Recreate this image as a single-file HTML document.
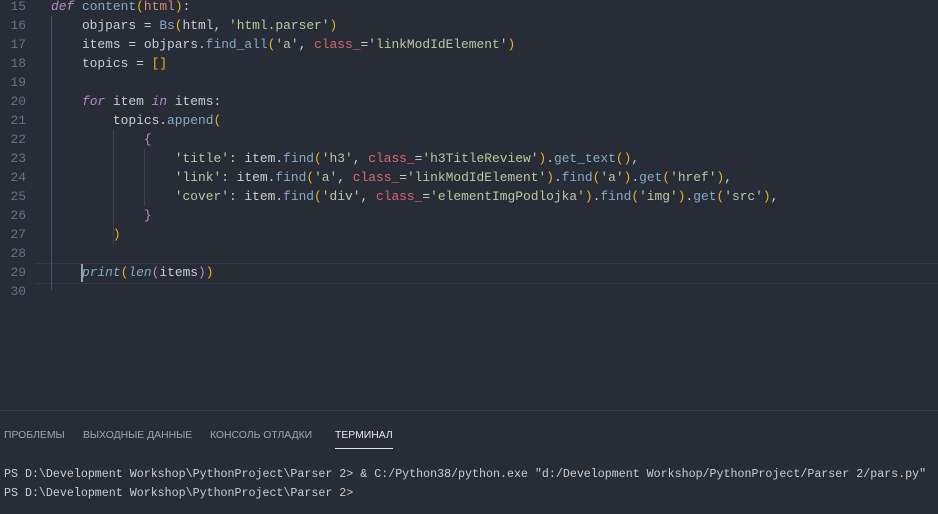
<!DOCTYPE html>
<html><head><meta charset="utf-8"><style>
body{margin:0;width:938px;height:514px;background:#282c37;overflow:hidden;font-family:"Liberation Mono",monospace;}
.ed{position:absolute;left:0;top:-3px;width:938px;}
.l{position:relative;height:19px;line-height:19px;font-size:12.9px;color:#c8ccd4;white-space:pre;}
.n{position:absolute;left:0;width:26px;text-align:right;color:#6b7080;}
.c{position:absolute;left:51px;}
.k{color:#b08cc6;font-style:italic}
.f{color:#82aac8}
.p{color:#d98a6f}
.b{color:#e6b422}
.m{color:#c586c0}
.s{color:#b8c99e}
.r{color:#d56a6a}
.hl{position:absolute;left:35px;right:0;top:263px;height:19px;border-top:1px solid #343846;border-bottom:1px solid #343846;}
.g{position:absolute;width:1px;background:#3c4150;}
.t{position:absolute;top:430px;font-family:"Liberation Sans",sans-serif;font-size:10.4px;color:#a0a4ae;white-space:nowrap;}
.term{position:absolute;left:4px;top:465px;font-size:11.65px;line-height:19px;color:#c8ccd4;white-space:pre;}
</style></head><body>
<div class="hl"></div>
<div class="g" style="left:51px;top:16px;height:274px;background:#4a5060"></div>
<div class="g" style="left:113px;top:130px;height:114px"></div>
<div class="g" style="left:144px;top:149px;height:57px"></div>
<div style="position:absolute;left:81px;top:264px;width:2px;height:18px;background:#9aa0b0"></div>
<div class="ed">
<div class="l"><span class="n">15</span><span class="c"><span class="k">def</span> <span class="f">content</span><span class="b">(</span><span class="p">html</span><span class="b">)</span>:</span></div>
<div class="l"><span class="n">16</span><span class="c">    objpars = <span class="f">Bs</span><span class="b">(</span>html, <span class="s">'html.parser'</span><span class="b">)</span></span></div>
<div class="l"><span class="n">17</span><span class="c">    items = objpars.<span class="f">find_all</span><span class="b">(</span><span class="s">'a'</span>, <span class="r">class_</span>=<span class="s">'linkModIdElement'</span><span class="b">)</span></span></div>
<div class="l"><span class="n">18</span><span class="c">    topics = <span class="b">[]</span></span></div>
<div class="l"><span class="n">19</span></div>
<div class="l"><span class="n">20</span><span class="c">    <span class="k">for</span> item <span class="k">in</span> items:</span></div>
<div class="l"><span class="n">21</span><span class="c">        topics.<span class="f">append</span><span class="b">(</span></span></div>
<div class="l"><span class="n">22</span><span class="c">            <span class="m">{</span></span></div>
<div class="l"><span class="n">23</span><span class="c">                <span class="s">'title'</span>: item.<span class="f">find</span><span class="b">(</span><span class="s">'h3'</span>, <span class="r">class_</span>=<span class="s">'h3TitleReview'</span><span class="b">)</span>.<span class="f">get_text</span><span class="b">()</span>,</span></div>
<div class="l"><span class="n">24</span><span class="c">                <span class="s">'link'</span>: item.<span class="f">find</span><span class="b">(</span><span class="s">'a'</span>, <span class="r">class_</span>=<span class="s">'linkModIdElement'</span><span class="b">)</span>.<span class="f">find</span><span class="b">(</span><span class="s">'a'</span><span class="b">)</span>.<span class="f">get</span><span class="b">(</span><span class="s">'href'</span><span class="b">)</span>,</span></div>
<div class="l"><span class="n">25</span><span class="c">                <span class="s">'cover'</span>: item.<span class="f">find</span><span class="b">(</span><span class="s">'div'</span>, <span class="r">class_</span>=<span class="s">'elementImgPodlojka'</span><span class="b">)</span>.<span class="f">find</span><span class="b">(</span><span class="s">'img'</span><span class="b">)</span>.<span class="f">get</span><span class="b">(</span><span class="s">'src'</span><span class="b">)</span>,</span></div>
<div class="l"><span class="n">26</span><span class="c">            <span class="m">}</span></span></div>
<div class="l"><span class="n">27</span><span class="c">        <span class="b">)</span></span></div>
<div class="l"><span class="n">28</span></div>
<div class="l"><span class="n">29</span><span class="c">    <span class="f" style="font-style:italic">print</span><span class="b">(</span><span class="f" style="font-style:italic">len</span><span class="m">(</span>items<span class="m">)</span><span class="b">)</span></span></div>
<div class="l"><span class="n">30</span></div>
</div>
<div style="position:absolute;left:0;right:0;top:410px;height:1px;background:#383c48"></div>
<div class="t" style="left:4px">ПРОБЛЕМЫ</div>
<div class="t" style="left:83px">ВЫХОДНЫЕ ДАННЫЕ</div>
<div class="t" style="left:210px">КОНСОЛЬ ОТЛАДКИ</div>
<div class="t" style="left:335px;color:#e8e8e8">ТЕРМИНАЛ</div>
<div style="position:absolute;left:335px;top:448px;width:58px;height:1px;background:#e0e0e0"></div>
<div class="term">PS D:\Development Workshop\PythonProject\Parser 2&gt; &amp; C:/Python38/python.exe "d:/Development Workshop/PythonProject/Parser 2/pars.py"
PS D:\Development Workshop\PythonProject\Parser 2&gt;</div>
</body></html>
